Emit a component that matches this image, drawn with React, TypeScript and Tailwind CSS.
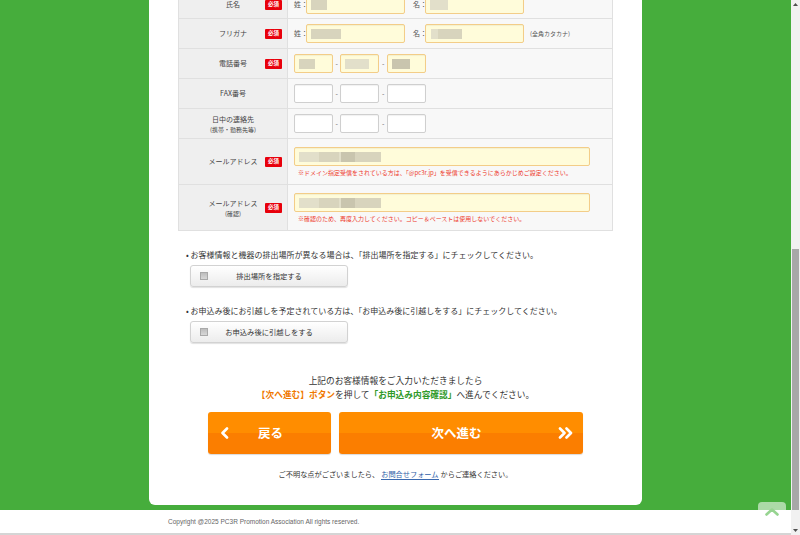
import React from "react";

const JP = "font-['Meiryo','Noto_Sans_CJK_JP',sans-serif]";

function Blur({ blocks }: { blocks: { l: number; w: number; c: string }[] }) {
  return (
    <>
      {blocks.map((b, i) => (
        <span
          key={i}
          className={`absolute top-[4px] h-[10px] blur-[0.6px] ${b.c}`}
          style={{ left: b.l, width: b.w }}
        />
      ))}
    </>
  );
}

function Field({
  w,
  filled,
  blocks = [],
}: {
  w: string;
  filled?: boolean;
  blocks?: { l: number; w: number; c: string }[];
}) {
  return (
    <div
      className={`relative h-[19px] ${w} rounded-[2px] border ${
        filled
          ? "border-[#f3cd88] bg-[#fffcda] shadow-[inset_0_1px_1px_rgba(0,0,0,0.05)]"
          : "border-[#cfcfcf] bg-white shadow-[inset_0_1px_1px_rgba(0,0,0,0.06)]"
      }`}
    >
      <Blur blocks={blocks} />
    </div>
  );
}

function Required() {
  return (
    <span className="absolute right-[5px] top-1/2 flex h-[10px] w-[17px] -translate-y-1/2 items-center justify-center rounded-[1px] bg-[#e8000b] text-[5.5px] font-bold leading-none text-white">
      必須
    </span>
  );
}

function Row({
  label,
  sub,
  req,
  children,
  h,
  last,
}: {
  label: React.ReactNode;
  sub?: string;
  req?: boolean;
  children: React.ReactNode;
  h: string;
  last?: boolean;
}) {
  return (
    <div className={`grid grid-cols-[109px_1fr] ${last ? "" : "border-b"} border-[#e0e0e0] ${h}`}>
      <div className="relative flex flex-col items-center justify-center border-r border-[#e0e0e0] bg-[#efefef] text-[7px] leading-[11px] text-[#444]">
        <div>{label}</div>
        {sub && <div className="text-[6px] leading-[9px]">{sub}</div>}
        {req && <Required />}
      </div>
      <div className="flex flex-col justify-center bg-[#f8f8f8] px-[6px]">{children}</div>
    </div>
  );
}

const g1 = "bg-[#d8d4bd]";
const g2 = "bg-[#c9c5ae]";
const g3 = "bg-[#e2dfca]";

function Phone({ filled, b }: { filled?: boolean; b?: { l: number; w: number; c: string }[][] }) {
  return (
    <div className="flex items-center gap-[2.5px] text-[7px] text-[#666]">
      <Field w="w-[39px]" filled={filled} blocks={b?.[0]} />
      <span>-</span>
      <Field w="w-[39px]" filled={filled} blocks={b?.[1]} />
      <span>-</span>
      <Field w="w-[39px]" filled={filled} blocks={b?.[2]} />
    </div>
  );
}

function CheckButton({ text }: { text: string }) {
  return (
    <div className="relative ml-[12px] mt-[4px] flex h-[22px] w-[158px] items-center justify-center rounded-[3px] border border-[#d2d2d2] bg-[linear-gradient(#ffffff,#ececec)] shadow-[0_1px_1px_rgba(0,0,0,0.12)] text-[7.3px] text-[#333]">
      <span className="absolute left-[9px] top-[6px] h-[8px] w-[8px] border border-[#a9a9a9] bg-[linear-gradient(#bdbdbd,#d8d8d8)]" />
      {text}
    </div>
  );
}

function Chevron({ double }: { double?: boolean }) {
  return (
    <svg width={double ? 15 : 8} height="12" viewBox={double ? "0 0 15 12" : "0 0 8 12"} fill="none">
      <path
        d={double ? "M2 1.5 6.5 6 2 10.5M8.5 1.5 13 6 8.5 10.5" : "M6 1.5 1.5 6 6 10.5"}
        stroke="white"
        strokeWidth="2.6"
        strokeLinecap="round"
        strokeLinejoin="round"
      />
    </svg>
  );
}

export default function App() {
  return (
    <div className={`flex h-[535px] w-[800px] overflow-hidden bg-white ${JP}`}>
      <div className="relative flex w-[791px] flex-col">
        <div className="h-[510px] overflow-hidden bg-[#46ad3c]">
          <div className="mx-auto flex h-[505px] w-[493px] flex-col rounded-b-[6px] bg-white px-[29px]">
            {/* form table */}
            <div className="-mt-[9px] border-x border-b border-[#e0e0e0]">
              <Row label="氏名" req h="h-[28px]">
                <div className="flex items-center text-[7px] text-[#555]">
                  <span className="w-[12px]">姓：</span>
                  <Field w="w-[99px]" filled blocks={[{ l: 4, w: 16, c: g1 }]} />
                  <span className="ml-[8px] w-[12px]">名：</span>
                  <Field w="w-[99px]" filled blocks={[{ l: 4, w: 18, c: g3 }]} />
                </div>
              </Row>
              <Row label="フリガナ" req h="h-[30px]">
                <div className="flex items-center text-[7px] text-[#555]">
                  <span className="w-[12px]">姓：</span>
                  <Field w="w-[99px]" filled blocks={[{ l: 4, w: 30, c: g1 }]} />
                  <span className="ml-[8px] w-[12px]">名：</span>
                  <Field w="w-[99px]" filled blocks={[{ l: 5, w: 10, c: g3 }, { l: 12, w: 24, c: g1 }]} />
                  <span className="ml-[6px] text-[6px]">(全角カタカナ)</span>
                </div>
              </Row>
              <Row label="電話番号" req h="h-[30px]">
                <Phone
                  filled
                  b={[
                    [{ l: 4, w: 16, c: g1 }],
                    [{ l: 4, w: 24, c: g3 }],
                    [{ l: 4, w: 18, c: g2 }],
                  ]}
                />
              </Row>
              <Row label="FAX番号" h="h-[30px]">
                <Phone />
              </Row>
              <Row label="日中の連絡先" sub="(携帯・勤務先等)" h="h-[30px]">
                <Phone />
              </Row>
              <Row label="メールアドレス" req h="h-[46px]">
                <Field
                  w="w-[296px]"
                  filled
                  blocks={[
                    { l: 4, w: 20, c: g3 },
                    { l: 24, w: 20, c: g1 },
                    { l: 44, w: 14, c: g3 },
                    { l: 46, w: 14, c: g2 },
                    { l: 60, w: 26, c: g1 },
                  ]}
                />
                <div className="ml-[4px] mt-[3px] text-[6px] leading-[8px] text-[#ee3a2c]">
                  ※ドメイン指定受信をされている方は、「@pc3r.jp」を受信できるようにあらかじめご設定ください。
                </div>
              </Row>
              <Row label="メールアドレス" sub="(確認)" req h="h-[45px]" last>
                <Field
                  w="w-[296px]"
                  filled
                  blocks={[
                    { l: 4, w: 20, c: g3 },
                    { l: 24, w: 20, c: g1 },
                    { l: 44, w: 14, c: g3 },
                    { l: 46, w: 14, c: g2 },
                    { l: 60, w: 26, c: g1 },
                  ]}
                />
                <div className="ml-[4px] mt-[3px] text-[6px] leading-[8px] text-[#ee3a2c]">
                  ※確認のため、再度入力してください。コピー＆ペーストは使用しないでください。
                </div>
              </Row>
            </div>

            {/* options */}
            <div className="mt-[18px] pl-[8px] text-[8px] leading-[12px] text-[#333]">
              •&nbsp;お客様情報と機器の排出場所が異なる場合は、「排出場所を指定する」にチェックしてください。
            </div>
            <CheckButton text="排出場所を指定する" />
            <div className="mt-[18px] pl-[8px] text-[8px] leading-[12px] text-[#333]">
              •&nbsp;お申込み後にお引越しを予定されている方は、「お申込み後に引越しをする」にチェックしてください。
            </div>
            <CheckButton text="お申込み後に引越しをする" />

            {/* guidance */}
            <div className="mt-[31px] text-center text-[8.7px] leading-[14px] text-[#333]">
              <div>上記のお客様情報をご入力いただきましたら</div>
              <div>
                <span className="font-semibold text-[#f07800]">【次へ進む】ボタン</span>を押して
                <span className="font-semibold text-[#2f9a2a]">「お申込み内容確認」</span>へ進んでください。
              </div>
            </div>

            {/* buttons */}
            <div className="mt-[10px] flex justify-center gap-[8px]">
              <div className="relative flex h-[42px] w-[123px] items-center rounded-[3px] bg-[linear-gradient(#ff8d00_50%,#fb7e00_50%)] shadow-[0_1px_1px_rgba(0,0,0,0.15)]">
                <span className="absolute left-[13px] top-[15px] flex">
                  <Chevron />
                </span>
                <span className="ml-[50px] text-[12.5px] font-bold text-white">戻る</span>
              </div>
              <div className="relative flex h-[42px] w-[244px] items-center justify-center rounded-[3px] bg-[linear-gradient(#ff8d00_50%,#fb7e00_50%)] shadow-[0_1px_1px_rgba(0,0,0,0.15)]">
                <span className="pr-[9px] text-[12.5px] font-bold text-white">次へ進む</span>
                <span className="absolute right-[10px] top-[15px] flex">
                  <Chevron double />
                </span>
              </div>
            </div>

            <div className="mt-[14px] text-center text-[7.2px] leading-[12px] text-[#333]">
              ご不明な点がございましたら、
              <span className="mx-[2px] border-b border-[#3b6ab0] text-[#2f5fa8]">お問合せフォーム</span>
              からご連絡ください。
            </div>
          </div>
        </div>

        <footer className="flex h-[25px] items-center border-b-2 border-[#d5d5d5] pl-[168px] font-['Liberation_Sans',sans-serif] text-[6.5px] text-[#666]">
          Copyright @2025 PC3R Promotion Association All rights reserved.
        </footer>

        {/* back to top */}
        <div className="absolute left-[758px] top-[502px] flex h-[20px] w-[28px] items-center justify-center rounded-t-[4px] bg-white/55">
          <svg width="14" height="8" viewBox="0 0 14 8" fill="none">
            <path d="M1.5 6.5 7 1.5l5.5 5" stroke="#97d491" strokeWidth="2.6" strokeLinecap="round" strokeLinejoin="round" />
          </svg>
        </div>
      </div>

      {/* scrollbar */}
      <div className="relative w-[9px] bg-[#f1f1f1]">
        <svg className="absolute left-[2px] top-[3px]" width="5" height="3" viewBox="0 0 5 3">
          <path d="M0 3 2.5 0 5 3z" fill="#505050" />
        </svg>
        <div className="absolute left-[1px] top-[249px] h-[261px] w-[7px] bg-[#a8a8a8]" />
        <svg className="absolute bottom-[3px] left-[2px]" width="5" height="3" viewBox="0 0 5 3">
          <path d="M0 0h5L2.5 3z" fill="#505050" />
        </svg>
      </div>
    </div>
  );
}
